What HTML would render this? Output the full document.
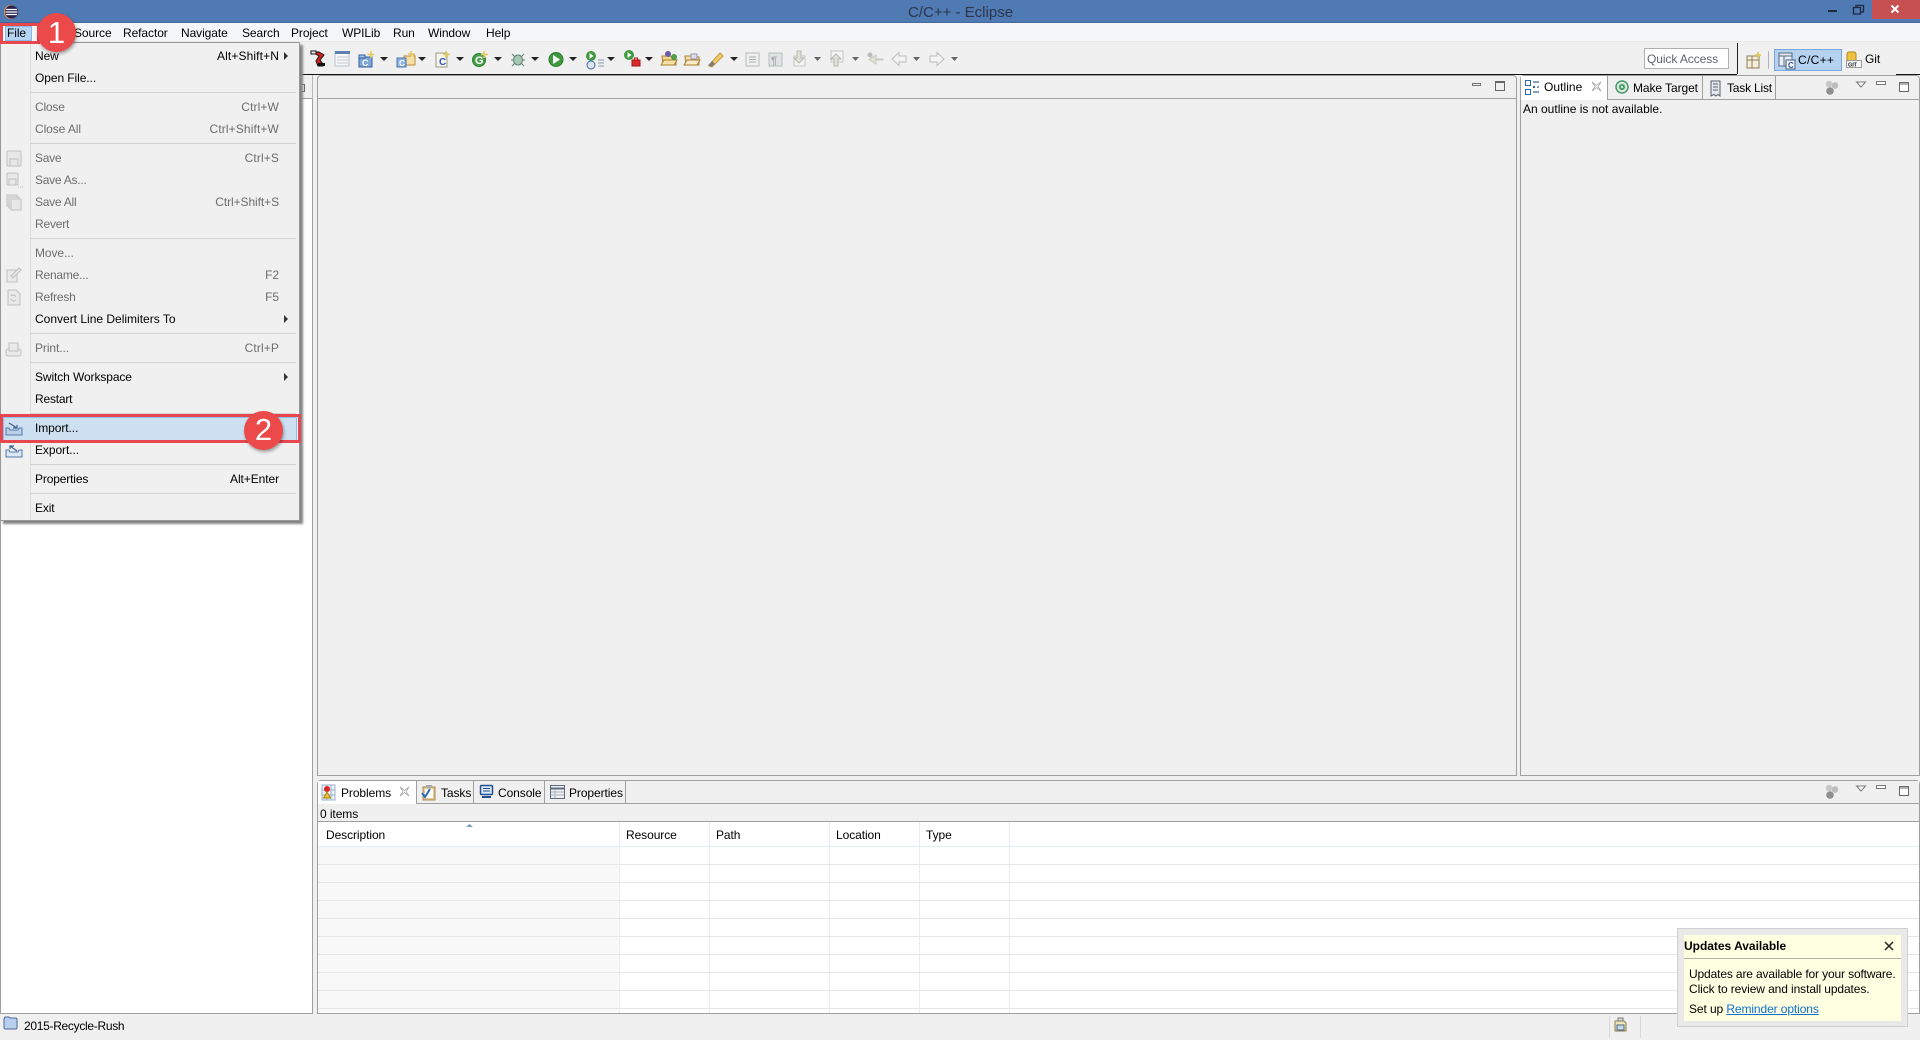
<!DOCTYPE html>
<html><head><meta charset="utf-8"><title>C/C++ - Eclipse</title>
<style>
html,body{margin:0;padding:0;width:1920px;height:1040px;overflow:hidden;background:#f0f0f0;font-family:"Liberation Sans",sans-serif;font-size:12px;color:#000;letter-spacing:-.08px}
div,span,svg{position:absolute}
.t{line-height:16px;white-space:nowrap}
.d{color:#6d6d6d}
.k{letter-spacing:.12px}
.s{left:31px;width:265px;height:1px;background:#d2d2d2;top:0}
.a{width:0;height:0;border-left:4px solid #333;border-top:4px solid transparent;border-bottom:4px solid transparent;left:284px}
.tab{top:76px;height:24px;border-right:1px solid #a0a0a0;border-bottom:1px solid #a0a0a0}
.row{left:318px;width:1601px;height:1px;background:#e6e6e6}
.col{top:822px;height:191px;width:1px;background:#ececec}
</style></head><body>

<!-- title bar -->
<div style="left:0;top:0;width:1920px;height:23px;background:#4f7ab4;border-bottom:1px solid #44699c;box-sizing:border-box"></div>
<svg style="left:3px;top:3px" width="16" height="18" viewBox="0 0 16 18"><circle cx="8" cy="9" r="7" fill="#e89a3a"/><circle cx="8.600" cy="9" r="6.600" fill="#2c2255"/><path d="M3 6.500h11M2.500 9h12M3 11.500h11" stroke="#fff" stroke-width="1.200"/></svg>
<div class="t" style="left:908px;top:4px;font-size:15px;color:#2c3648;letter-spacing:0;margin-top:1px">C/C++ - Eclipse</div>
<svg style="left:1820px;top:0" width="100" height="20" viewBox="0 0 100 20"><rect x="8" y="10" width="9" height="2" fill="#1d2a3d"/><path d="M33.500 7.500h7v6.500h-7zM36 7V5.500h7.500v6.500H41" fill="none" stroke="#1d2a3d" stroke-width="1.300"/><rect x="52" y="0" width="48" height="19" fill="#c75050"/><path d="M71.500 5.500l7 7M78.500 5.500l-7 7" stroke="#fff" stroke-width="2"/></svg>

<!-- menu bar -->
<div style="left:0;top:23px;width:1920px;height:18px;background:#f5f6f7"></div>
<div class="t" style="left:37px;top:25px">Edit</div>
<div class="t" style="left:74px;top:25px">Source</div>
<div class="t" style="left:123px;top:25px">Refactor</div>
<div class="t" style="left:181px;top:25px">Navigate</div>
<div class="t" style="left:242px;top:25px">Search</div>
<div class="t" style="left:291px;top:25px">Project</div>
<div class="t" style="left:342px;top:25px">WPILib</div>
<div class="t" style="left:393px;top:25px">Run</div>
<div class="t" style="left:428px;top:25px">Window</div>
<div class="t" style="left:486px;top:25px">Help</div>

<!-- toolbar -->
<div style="left:0;top:41px;width:1920px;height:33px;background:#f0f0f0;border-top:1px solid #e8e8e8;box-sizing:border-box"></div>
<div style="left:0;top:74px;width:1737px;height:1px;background:#111"></div>
<div style="left:1896px;top:74px;width:24px;height:1px;background:#111"></div>
<div style="left:1737px;top:43px;width:1px;height:31px;background:#222"></div>

<svg style="left:300px;top:44px" width="680" height="28" viewBox="300 44 680 28">
<!-- robot -->
<path d="M312 52h7l5 3-4 5 3 4v2h-5l-2-5 3-5z" fill="#d92020" stroke="#111" stroke-width="1"/><rect x="311" y="51" width="5" height="3" fill="#eee" stroke="#111"/><rect x="318" y="63" width="7" height="3" fill="#111"/>
<!-- table -->
<rect x="335" y="52" width="14" height="14" fill="#f4f6f8" stroke="#b9c2cc"/><rect x="335" y="51" width="15" height="3" fill="#5d80ad"/><path d="M337 57h11M337 60h11M337 63h11" stroke="#c3c9d0"/>
<!-- new c project -->
<rect x="359" y="57" width="13" height="10" fill="#7fa6d8" stroke="#35609c"/><rect x="359" y="55" width="6" height="3" fill="#9fbfe6" stroke="#35609c"/><text x="362" y="66" font-size="9" font-weight="bold" fill="#fff" font-family="Liberation Sans">C</text><path d="M371 51v7M367.500 54.500h7" stroke="#e6c860" stroke-width="1.600"/>
<!-- new source folder -->
<path d="M404 56h7v-2h3v2h1v9h-11z" fill="#f7dfa6" stroke="#b88c3a"/><rect x="397" y="58" width="9" height="9" fill="#90b3e0" stroke="#4a74ac"/><text x="399" y="66" font-size="8" font-weight="bold" fill="#fff" font-family="Liberation Sans">C</text><path d="M411 51v6M408 54h6" stroke="#e6c860" stroke-width="1.600"/>
<!-- new c file -->
<rect x="436" y="53" width="11" height="14" fill="#f6f6ea" stroke="#9a9a80"/><text x="439" y="65" font-size="10" font-weight="bold" fill="#3453c0" font-family="Liberation Sans">C</text><path d="M446 51v7M443 54.500h7" stroke="#e6c860" stroke-width="1.600"/>
<!-- new class -->
<circle cx="479" cy="60" r="6.500" fill="#46a04a" stroke="#2d7a32"/><text x="475" y="64" font-size="11" font-weight="bold" fill="#fff" font-family="Liberation Sans">G</text><path d="M484 51v7M481 54.500h7" stroke="#e6c860" stroke-width="1.600"/>
<!-- bug -->
<ellipse cx="518" cy="60" rx="4.500" ry="5" fill="#a6c8b4" stroke="#5b8270"/><path d="M512 54l3 3M524 54l-3 3M511 60h2M523 60h2M512 66l3-3M524 66l-3-3" stroke="#6a7a74" stroke-width="1"/>
<!-- run -->
<circle cx="556" cy="59.500" r="7" fill="#3f9a3f" stroke="#2a7a2a"/><path d="M553 55l7 4.500-7 4.500z" fill="#fff"/>
<!-- run ext -->
<circle cx="591" cy="56" r="5" fill="#3f9a3f"/><path d="M589.500 53l4 3-4 3z" fill="#fff"/><circle cx="591" cy="65" r="4" fill="#dde6f2" stroke="#3d66a8"/><path d="M598 60h6M598 63h6M598 66h6" stroke="#8a9ab0"/>
<!-- external tool -->
<circle cx="629" cy="55" r="5" fill="#3f9a3f"/><path d="M627.500 52l4 3-4 3z" fill="#fff"/><rect x="632" y="60" width="8" height="6" fill="#d82c2c" stroke="#a11"/><rect x="634.500" y="58" width="3" height="2" fill="none" stroke="#a11"/>
<!-- open folders -->
<path d="M662 56h6l8 1v8h-13z" fill="#f5d48b" stroke="#a87e30"/><path d="M661 65l3-5h13l-3 5z" fill="#f8e1a6" stroke="#a87e30"/><circle cx="668" cy="54" r="3" fill="#6e5aa6"/><circle cx="674" cy="57" r="3" fill="#4ca04c"/>
<path d="M685 56h6l8 1v8h-13z" fill="#f5e1b4" stroke="#a87e30"/><path d="M684 65l3-5h13l-3 5z" fill="#f8ebc9" stroke="#a87e30"/><rect x="691" y="54" width="6" height="5" fill="#dde" stroke="#99a"/>
<!-- pencil -->
<path d="M709 65l11-12 3 3-11 11z" fill="#f2c96c" stroke="#c99b3a"/><path d="M708 66l4-5 3 3-4 3z" fill="#7b7b7b"/><path d="M708 66l3 1-4 1z" fill="#fbe9a8"/>
<!-- disabled -->
<rect x="746" y="53" width="13" height="13" fill="#eef0f0" stroke="#b8bcbc"/><path d="M749 57h7M749 59.500h7M749 62h7" stroke="#a9adad"/>
<rect x="769" y="53" width="13" height="13" fill="#dfe3e3" stroke="#b8bcbc"/><text x="771" y="64" font-size="11" font-weight="bold" fill="#a4a8a8" font-family="Liberation Sans">¶</text>
<rect x="794" y="56" width="11" height="10" fill="#f4f4f4" stroke="#c2c4c4"/><path d="M797 51h4v7h3l-5 5-5-5h3z" fill="#e0e2d8" stroke="#b6b8ae"/>
<rect x="831" y="51" width="12" height="11" fill="#f4f4f4" stroke="#c2c4c4"/><path d="M834 66h4v-7h3l-5-5-5 5h3z" fill="#e0e2d8" stroke="#b6b8ae"/>
<path d="M883 59h-7v-4l-7 4.500 7 4.500v-4h7z" fill="#e2e2da" stroke="#c8c8c0"/><circle cx="870" cy="55" r="2.500" fill="#bbb"/>
<path d="M906 56h-7v-3.500l-7 6.500 7 6.500v-3.500h7z" fill="#f4f4f4" stroke="#bbb"/>
<path d="M930 56h7v-3.500l7 6.500-7 6.500v-3.500h-7z" fill="#f4f4f4" stroke="#bbb"/>
<!-- arrows -->
<g fill="#222" transform="translate(-1 0)"><path d="M381 57h8l-4 4zM419 57h8l-4 4zM457 57h8l-4 4zM495 57h8l-4 4zM532 57h8l-4 4zM570 57h8l-4 4zM608 57h8l-4 4zM646 57h8l-4 4zM731 57h8l-4 4z"/></g>
<g fill="#666" transform="translate(-1 0)"><path d="M815 57h7l-3.500 4zM853 57h7l-3.500 4zM914 57h7l-3.500 4zM952 57h7l-3.500 4z"/></g>
</svg>

<!-- perspective bar -->
<div style="left:1644px;top:48px;width:85px;height:21px;background:#fff;border:1px solid #b0b0b0;box-sizing:border-box"></div>
<div class="t" style="left:1647px;top:51px;color:#5f6670">Quick Access</div>
<svg style="left:1745px;top:50px" width="18" height="20" viewBox="0 0 18 20"><rect x="2" y="6" width="12" height="12" fill="#f6eedb" stroke="#8a7e5a"/><path d="M2 10h12M7 6v12" stroke="#8a7e5a"/><path d="M13 2v6M10 5h6" stroke="#e6c860" stroke-width="1.800"/></svg>
<div style="left:1768px;top:51px;width:1px;height:18px;background:#b4b4b4"></div>
<div style="left:1774px;top:49px;width:68px;height:22px;background:#b5d3f0;border:1px solid #7da7d6;box-sizing:border-box"></div>
<svg style="left:1778px;top:52px" width="18" height="18" viewBox="0 0 18 18"><rect x="1" y="1" width="13" height="13" fill="#e7edf4" stroke="#5a6a80"/><path d="M1 4h13M6 4v10" stroke="#5a6a80"/><rect x="8" y="8" width="9" height="9" fill="#f5f5ea" stroke="#3d5f90"/><text x="10" y="16" font-size="8" font-weight="bold" fill="#2f55bb" font-family="Liberation Sans">C</text></svg>
<div class="t" style="left:1798px;top:52px;letter-spacing:.3px">C/C++</div>
<svg style="left:1846px;top:51px" width="16" height="18" viewBox="0 0 16 18"><rect x="1" y="1" width="9" height="11" rx="2" fill="#f0c040" stroke="#b08a20"/><rect x=".5" y="9.500" width="15" height="7" fill="#f5f5f5" stroke="#999"/><text x="2" y="15.500" font-size="5.500" font-weight="bold" fill="#222" font-family="Liberation Sans">GIT</text></svg>
<div class="t" style="left:1865px;top:51px">Git</div>

<!-- left panel -->
<div style="left:0;top:98px;width:313px;height:916px;background:#fff;border-left:1px solid #a0a0a0;border-right:1px solid #a0a0a0;border-bottom:1px solid #a0a0a0;box-sizing:border-box"></div>
<div style="left:0;top:98px;width:313px;height:1px;background:#a0a0a0"></div>
<div style="left:300px;top:84px;width:5px;height:8px;border:1px solid #666;border-left:0;box-sizing:border-box"></div>
<div style="left:312px;top:75px;width:1px;height:24px;background:#b8b8b8;"></div>

<!-- editor panel -->
<div style="left:317px;top:75px;width:1200px;height:701px;background:#f0f0f0;border:1px solid #a0a0a0;box-sizing:border-box;border-radius:4px 4px 0 0"></div>
<div style="left:318px;top:98px;width:1198px;height:1px;background:#a0a0a0"></div>
<div style="left:1472px;top:83px;width:9px;height:3px;border:1px solid #777;box-sizing:border-box"></div>
<div style="left:1495px;top:81px;width:10px;height:10px;border:1px solid #666;border-top-width:2px;box-sizing:border-box"></div>

<!-- outline panel -->
<div style="left:1520px;top:75px;width:400px;height:701px;background:#f0f0f0;border:1px solid #a0a0a0;box-sizing:border-box;border-radius:4px 4px 0 0"></div>
<div style="left:1608px;top:99px;width:311px;height:1px;background:#a0a0a0"></div>
<div style="left:1521px;top:76px;width:87px;height:25px;background:#fff;border-right:1px solid #a0a0a0;box-sizing:border-box"></div>
<div style="left:1521px;top:100px;width:398px;height:1px;background:#f0f0f0"></div>
<div class="tab" style="left:1608px;width:95px;box-sizing:border-box"></div>
<div class="tab" style="left:1703px;width:73px;box-sizing:border-box"></div>
<svg style="left:1524px;top:79px" width="16" height="17" viewBox="0 0 16 17"><rect x="1.500" y="1.500" width="5" height="5" fill="#fff" stroke="#2b6ab0"/><rect x="1.500" y="10.500" width="5" height="5" fill="#fff" stroke="#2b6ab0"/><path d="M9 3h6M9 8h2M13 8h2M9 13h6" stroke="#5a7ea8" stroke-width="1.500"/><rect x="9" y="7" width="2" height="2" fill="#2b6ab0"/></svg>
<div class="t" style="left:1544px;top:79px;letter-spacing:.05px">Outline</div>
<svg style="left:1591px;top:81px" width="11" height="11" viewBox="0 0 11 11"><path d="M1 1l4.500 3.500L10 1 7 5.500 10 10 5.500 6.500 1 10 4 5.500z" fill="#fff" stroke="#a8a8a8" stroke-width=".8"/></svg>
<svg style="left:1614px;top:80px" width="16" height="16" viewBox="0 0 16 16"><circle cx="8" cy="7" r="6" fill="#dbe8db" stroke="#4a9a6a" stroke-width="1.500"/><circle cx="8" cy="7" r="3" fill="#3d9a5a"/><circle cx="8" cy="7" r="1.200" fill="#cfe"/></svg>
<div class="t" style="left:1633px;top:80px">Make Target</div>
<svg style="left:1709px;top:80px" width="14" height="17" viewBox="0 0 14 17"><path d="M2 1h9v15l-2-1.500-2 1.500-2-1.500L2 16z" fill="#e4e7ec" stroke="#58606c"/><path d="M4 4h5M4 7h5M4 10h5" stroke="#58606c"/></svg>
<div class="t" style="left:1727px;top:80px;letter-spacing:-.2px">Task List</div>
<svg style="left:1824px;top:79px" width="16" height="17" viewBox="0 0 16 17"><circle cx="5" cy="5" r="3.300" fill="#c8c8c8"/><circle cx="11" cy="6.500" r="3.300" fill="#bdbdbd"/><circle cx="6" cy="12" r="3.800" fill="#8f8f8f"/></svg>
<svg style="left:1855px;top:79px" width="62" height="14" viewBox="0 0 62 14"><path d="M1.500 3h9L6 8z" fill="#fff" stroke="#777"/><rect x="21.500" y="2.500" width="9" height="3" fill="#fff" stroke="#777"/><rect x="44.500" y="3.500" width="9" height="9" fill="#fff" stroke="#666"/><path d="M44 5h10" stroke="#666"/></svg>
<div class="t" style="left:1523px;top:101px;letter-spacing:0">An outline is not available.</div>

<!-- bottom panel -->
<div style="left:317px;top:780px;width:1603px;height:234px;background:#fff;border:1px solid #a0a0a0;box-sizing:border-box;border-radius:4px 4px 0 0"></div>
<div style="left:318px;top:781px;width:1601px;height:22px;background:#f0f0f0"></div>
<div style="left:417px;top:803px;width:1502px;height:1px;background:#a0a0a0"></div>
<div style="left:318px;top:781px;width:99px;height:23px;background:#fff;border-right:1px solid #a0a0a0;box-sizing:border-box"></div>
<div style="left:318px;top:804px;width:1601px;height:17px;background:#f0f0f0"></div>
<div style="left:318px;top:821px;width:1601px;height:1px;background:#a0a0a0"></div>
<div style="left:473px;top:781px;width:1px;height:22px;background:#a0a0a0"></div>
<div style="left:544px;top:781px;width:1px;height:22px;background:#a0a0a0"></div>
<div style="left:625px;top:781px;width:1px;height:22px;background:#a0a0a0"></div>
<svg style="left:321px;top:784px" width="16" height="17" viewBox="0 0 16 17"><path d="M1 1h13v15H1zM1 6h13M1 11h13M6 1v15M10 1v15" fill="#eef2f7" stroke="#9bb0cc"/><circle cx="6" cy="5" r="3" fill="#d22"/><path d="M6 8l3.500 6h-7z" fill="#f0c040" stroke="#a80"/></svg>
<div class="t" style="left:341px;top:785px">Problems</div>
<svg style="left:399px;top:786px" width="11" height="11" viewBox="0 0 11 11"><path d="M1 1l4.500 3.500L10 1 7 5.500 10 10 5.500 6.500 1 10 4 5.500z" fill="#fff" stroke="#a8a8a8" stroke-width=".8"/></svg>
<svg style="left:421px;top:784px" width="16" height="17" viewBox="0 0 16 17"><rect x="2" y="3" width="12" height="13" fill="#e6c894" stroke="#a98850"/><rect x="4" y="5" width="8" height="9" fill="#fff"/><rect x="5" y="1" width="6" height="3" fill="#aaa"/><path d="M1 9l3 4 5-8" fill="none" stroke="#2a6ac0" stroke-width="2"/></svg>
<div class="t" style="left:441px;top:785px">Tasks</div>
<svg style="left:479px;top:784px" width="16" height="16" viewBox="0 0 16 16"><rect x="1.500" y="1.500" width="12" height="9" rx="1" fill="#dde8f5" stroke="#1f4f90" stroke-width="1.500"/><path d="M4 4.500h7M4 7h7" stroke="#1f4f90"/><path d="M3 13h9" stroke="#1f4f90" stroke-width="2"/></svg>
<div class="t" style="left:498px;top:785px">Console</div>
<svg style="left:550px;top:785px" width="15" height="14" viewBox="0 0 15 14"><rect x=".5" y=".5" width="14" height="13" fill="#f0f0f2" stroke="#5f6b80"/><path d="M1 3.500h13" stroke="#5f6b80" stroke-width="2"/><path d="M1 7h13M1 10h13M5 4v9" stroke="#a9b2c0"/></svg>
<div class="t" style="left:569px;top:785px">Properties</div>
<svg style="left:1824px;top:783px" width="16" height="17" viewBox="0 0 16 17"><circle cx="5" cy="5" r="3.300" fill="#c8c8c8"/><circle cx="11" cy="6.500" r="3.300" fill="#bdbdbd"/><circle cx="6" cy="12" r="3.800" fill="#8f8f8f"/></svg>
<svg style="left:1855px;top:783px" width="62" height="14" viewBox="0 0 62 14"><path d="M1.500 3h9L6 8z" fill="#fff" stroke="#777"/><rect x="21.500" y="2.500" width="9" height="3" fill="#fff" stroke="#777"/><rect x="44.500" y="3.500" width="9" height="9" fill="#fff" stroke="#666"/><path d="M44 5h10" stroke="#666"/></svg>
<div class="t" style="left:320px;top:806px">0 items</div>

<!-- table -->
<div style="left:318px;top:847px;width:301px;height:165px;background:#f8f8f8"></div>
<div class="t" style="left:326px;top:827px">Description</div>
<div class="t" style="left:626px;top:827px">Resource</div>
<div class="t" style="left:716px;top:827px">Path</div>
<div class="t" style="left:836px;top:827px">Location</div>
<div class="t" style="left:926px;top:827px">Type</div>
<svg style="left:465px;top:823px" width="9" height="5" viewBox="0 0 9 5"><path d="M1 4l3.500-3L8 4z" fill="#7a9fc4"/></svg>
<div class="row" style="top:846px;background:#e4ecf6"></div>
<div class="row" style="top:864px"></div><div class="row" style="top:882px"></div><div class="row" style="top:900px"></div><div class="row" style="top:918px"></div><div class="row" style="top:936px"></div><div class="row" style="top:954px"></div><div class="row" style="top:972px"></div><div class="row" style="top:990px"></div><div class="row" style="top:1008px"></div>
<div class="col" style="left:619px"></div><div class="col" style="left:709px"></div><div class="col" style="left:829px"></div><div class="col" style="left:919px"></div><div class="col" style="left:1009px"></div>

<!-- status bar -->
<div style="left:0;top:1014px;width:1920px;height:26px;background:#f0f0f0"></div>
<svg style="left:3px;top:1016px" width="15" height="14" viewBox="0 0 15 14"><path d="M1 3l1-2h4l1 1h6l1 1v9l-1 1H2l-1-1z" fill="#b8d0ee" stroke="#4a6a9c"/></svg>
<div class="t" style="left:24px;top:1018px;letter-spacing:-.3px">2015-Recycle-Rush</div>
<div style="left:1609px;top:1016px;width:1px;height:22px;background:#d8d8d8"></div>
<div style="left:1640px;top:1016px;width:1px;height:22px;background:#d8d8d8"></div>
<svg style="left:1612px;top:1017px" width="16" height="16" viewBox="0 0 16 16"><path d="M3 4h9l2 2v8H3z" fill="#efe3b8" stroke="#8a7e4a"/><rect x="5" y="8" width="7" height="5" fill="#c8d8e8" stroke="#4a6a8a"/><path d="M6 1h5v3H6z" fill="#ddd" stroke="#777"/></svg>

<!-- update popup -->
<div style="left:1677px;top:928px;width:231px;height:99px;background:#e9e9e9;border:1px solid #d0d0d0;box-sizing:border-box"></div>
<div style="left:1684px;top:935px;width:217px;height:86px;background:#ffffe1"></div>
<div style="left:1684px;top:958px;width:217px;height:1px;background:#b0b0a0"></div>
<div class="t" style="left:1684px;top:938px;font-weight:bold;letter-spacing:-.02px">Updates Available</div>
<svg style="left:1883px;top:940px" width="12" height="12" viewBox="0 0 12 12"><path d="M2 2l8 8M10 2l-8 8" stroke="#222" stroke-width="1.500"/></svg>
<div class="t" style="left:1689px;top:966px;letter-spacing:-.14px">Updates are available for your software.</div>
<div class="t" style="left:1689px;top:981px;letter-spacing:-.1px">Click to review and install updates.</div>
<div class="t" style="left:1689px;top:1001px;letter-spacing:-.1px">Set up <span style="position:static;color:#0d6fce;text-decoration:underline">Reminder options</span></div>

<!-- menu -->
<div style="left:0;top:42px;width:300px;height:479px;background:#f0f0f0;border:1px solid #979797;box-sizing:border-box;box-shadow:3px 3px 2px #858585"></div>
<div style="left:30px;top:43px;width:1px;height:477px;background:#dcdcdc"></div>
<div class="s" style="top:92px"></div><div class="s" style="top:143px"></div><div class="s" style="top:238px"></div><div class="s" style="top:333px"></div><div class="s" style="top:362px"></div><div class="s" style="top:413px"></div><div class="s" style="top:464px"></div><div class="s" style="top:493px"></div>

<div class="t" style="left:35px;top:48px">New</div><div class="t k" style="right:1641px;top:48px">Alt+Shift+N</div>
<div class="t" style="left:35px;top:70px">Open File...</div>
<div class="t d" style="left:35px;top:99px;letter-spacing:-.2px">Close</div><div class="t d k" style="right:1641px;top:99px">Ctrl+W</div>
<div class="t d" style="left:35px;top:121px">Close All</div><div class="t d k" style="right:1641px;top:121px">Ctrl+Shift+W</div>
<div class="t d" style="left:35px;top:150px;letter-spacing:-.25px">Save</div><div class="t d k" style="right:1641px;top:150px">Ctrl+S</div>
<div class="t d" style="left:35px;top:172px;letter-spacing:-.25px">Save As...</div>
<div class="t d" style="left:35px;top:194px;letter-spacing:-.25px">Save All</div><div class="t d" style="right:1641px;top:194px">Ctrl+Shift+S</div>
<div class="t d" style="left:35px;top:216px;letter-spacing:-.2px">Revert</div>
<div class="t d" style="left:35px;top:245px">Move...</div>
<div class="t d" style="left:35px;top:267px;letter-spacing:-.2px">Rename...</div><div class="t d" style="right:1641px;top:267px">F2</div>
<div class="t d" style="left:35px;top:289px;letter-spacing:-.2px">Refresh</div><div class="t d" style="right:1641px;top:289px">F5</div>
<div class="t" style="left:35px;top:311px;letter-spacing:0">Convert Line Delimiters To</div>
<div class="t d" style="left:35px;top:340px">Print...</div><div class="t d k" style="right:1641px;top:340px">Ctrl+P</div>
<div class="t" style="left:35px;top:369px;letter-spacing:-.1px">Switch Workspace</div>
<div class="t" style="left:35px;top:391px;letter-spacing:-.2px">Restart</div>

<div class="a" style="top:52px"></div><div class="a" style="top:315px"></div><div class="a" style="top:373px"></div>

<!-- menu icons -->
<svg style="left:5px;top:150px" width="18" height="62" viewBox="0 0 18 62"><g fill="#e8e8e8" stroke="#c0c0c0"><rect x="2" y="1" width="14" height="15" rx="1"/><rect x="5" y="9" width="8" height="7"/><rect x="2" y="23" width="11" height="12" rx="1"/><rect x="4" y="29" width="7" height="6"/><rect x="2" y="45" width="10" height="11"/><rect x="4" y="47" width="10" height="11"/><rect x="6" y="49" width="10" height="11"/></g><path d="M13 37h5" stroke="#bbb" stroke-dasharray="1 1"/></svg>
<svg style="left:5px;top:266px" width="18" height="100" viewBox="0 0 18 100"><g fill="#e9e9e9" stroke="#c0c0c0"><path d="M2 4h10v12H2z"/><path d="M6 10l8-8 2 2-8 8z"/><path d="M3 24h8l4 4v11H3z"/><rect x="1" y="83" width="15" height="7" rx="2"/><rect x="4" y="77" width="9" height="8"/></g><path d="M6 30c2-2 4-1 5 1M11 34c-2 2-4 1-5-1" fill="none" stroke="#bbb"/></svg>

<!-- highlight Import -->
<div style="left:3px;top:417px;width:294px;height:24px;background:#cde0f1;border:1px solid #90c0e8;box-sizing:border-box"></div>
<div class="t" style="left:35px;top:420px">Import...</div>
<div class="t" style="left:35px;top:442px">Export...</div>
<svg style="left:5px;top:419px" width="18" height="42" viewBox="0 0 18 42"><path d="M1 9h3l1 2h8l1-2h3v7H1z" fill="#bcd0e8" stroke="#5478a8"/><path d="M4 4l8 5M12 6v3H8" fill="none" stroke="#3c5f90" stroke-width="1.200"/><path d="M1 31h3l1 2h8l1-2h3v7H1z" fill="#dce8f4" stroke="#5478a8"/><path d="M12 32L5 27M5 30v-3h4" fill="none" stroke="#3c5f90" stroke-width="1.200"/></svg>
<div class="t" style="left:35px;top:471px;letter-spacing:-.15px">Properties</div><div class="t" style="right:1641px;top:471px">Alt+Enter</div>
<div class="t" style="left:35px;top:500px;letter-spacing:-.15px">Exit</div>

<!-- red callouts -->
<div style="left:0;top:23px;width:40px;height:21px;border:3px solid #e8484d;box-sizing:border-box"></div>
<div style="left:5px;top:26px;width:27px;height:15px;background:#b5d5f3;border:1px solid #8ab8e6;box-sizing:border-box"></div>
<div class="t" style="left:7px;top:25px">File</div>
<div style="left:0;top:414px;width:301px;height:29px;border:3px solid #e8484d;box-sizing:border-box"></div>
<div style="left:37px;top:13px;width:39px;height:39px;border-radius:50%;background:#ec4a4a;box-shadow:1px 2px 3px rgba(0,0,0,.35);color:#fff;font-size:31px;line-height:39px;text-align:center">1</div>
<div style="left:244px;top:411px;width:39px;height:39px;border-radius:50%;background:#ec4a4a;box-shadow:1px 2px 3px rgba(0,0,0,.35);color:#fff;font-size:31px;line-height:38px;text-align:center">2</div>
</body></html>
